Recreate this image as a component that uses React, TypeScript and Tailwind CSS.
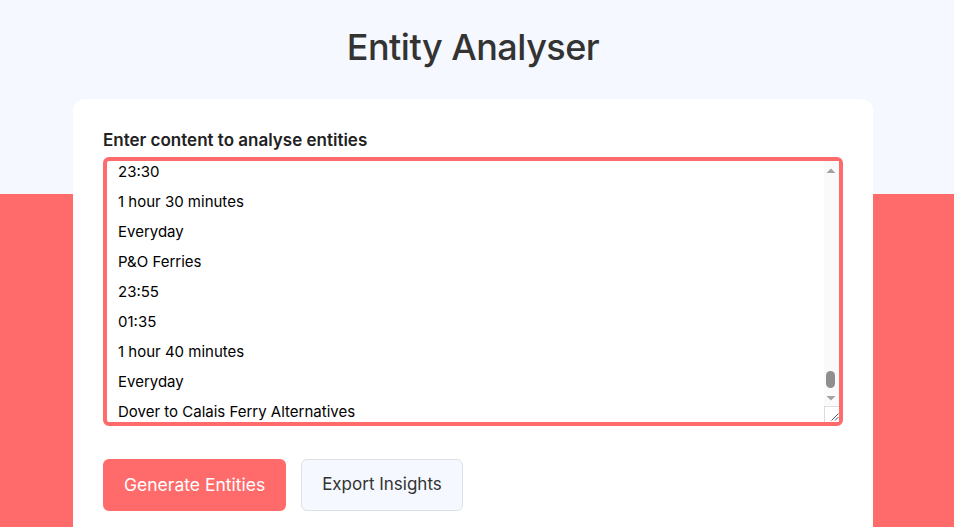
import React, { useEffect, useRef } from "react";

// Ferry timetable used as the pre-filled textarea content
const routes: [string, string, string, string][] = [
  ["DFDS", "00:30", "02:00", "1 hour 30 minutes"],
  ["P&O Ferries", "02:05", "03:45", "1 hour 40 minutes"],
  ["DFDS", "04:00", "05:30", "1 hour 30 minutes"],
  ["P&O Ferries", "05:40", "07:20", "1 hour 40 minutes"],
  ["DFDS", "06:00", "07:30", "1 hour 30 minutes"],
  ["P&O Ferries", "07:25", "09:05", "1 hour 40 minutes"],
  ["DFDS", "08:00", "09:30", "1 hour 30 minutes"],
  ["P&O Ferries", "09:10", "10:50", "1 hour 40 minutes"],
  ["DFDS", "10:00", "11:30", "1 hour 30 minutes"],
  ["P&O Ferries", "11:15", "12:55", "1 hour 40 minutes"],
  ["DFDS", "12:00", "13:30", "1 hour 30 minutes"],
  ["P&O Ferries", "13:20", "15:00", "1 hour 40 minutes"],
  ["DFDS", "14:00", "15:30", "1 hour 30 minutes"],
  ["P&O Ferries", "15:25", "17:05", "1 hour 40 minutes"],
  ["DFDS", "16:00", "17:30", "1 hour 30 minutes"],
  ["P&O Ferries", "17:30", "19:10", "1 hour 40 minutes"],
  ["DFDS", "18:00", "19:30", "1 hour 30 minutes"],
  ["P&O Ferries", "19:35", "21:15", "1 hour 40 minutes"],
  ["DFDS", "22:00", "23:30", "1 hour 30 minutes"],
  ["P&O Ferries", "23:55", "01:35", "1 hour 40 minutes"],
];

const lines: string[] = [
  "Dover to Calais Ferry Timetable",
  "Operator",
  "Departure",
  "Arrival",
  "Duration",
  "Frequency",
];
routes.forEach(([op, dep, arr, dur]) => {
  lines.push(op, dep, arr, dur, "Everyday");
});
lines.push(
  "Dover to Calais Ferry Alternatives",
  "Eurotunnel Le Shuttle",
  "Folkestone to Calais",
  "35 minutes"
);

const content = lines.join("\n");

// index of the "23:30" arrival line of the last DFDS sailing
const firstVisible = lines.lastIndexOf("23:30");

// Classic scrollbar drawn over the textarea (headless browser hides the native one)
const FakeScrollbar = () => (
  <div className="pointer-events-none absolute top-[4px] right-[4px] bottom-[4px] flex w-[15px] flex-col bg-[#fafafa]">
    <div className="h-[15px] shrink-0">
      <svg width="15" height="15" viewBox="0 0 15 15">
        <polygon points="2.5,12 11.5,12 7,7.5" fill="#a3a3a3" />
      </svg>
    </div>
    <div className="relative flex-1">
      <div className="absolute bottom-[3px] left-[2px] h-[17px] w-[9px] rounded-full bg-[#8e8e8e]" />
    </div>
    <div className="h-[15px] shrink-0">
      <svg width="15" height="15" viewBox="0 0 15 15">
        <polygon points="2.5,5 11.5,5 7,9.5" fill="#a3a3a3" />
      </svg>
    </div>
    <div className="h-[16px] shrink-0 border-t border-l border-[#dcdcdc] bg-white">
      <svg width="15" height="15" viewBox="0 0 15 15">
        <path d="M13.5 6.5 L6.5 13.5 M13.5 10 L10 13.5" stroke="#555555" strokeWidth="1" />
      </svg>
    </div>
  </div>
);

export default function App() {
  const areaRef = useRef<HTMLTextAreaElement>(null);

  useEffect(() => {
    if (!areaRef.current) return;
    // padding-top 12px + line offset, nudged up like the screenshot
    areaRef.current.scrollTop = 12 + firstVisible * 30 + 4;
  }, []);

  return (
    <div className="min-h-screen bg-[linear-gradient(to_bottom,#f5f8fe_194px,#ff6b6b_194px)] pr-2 font-['Inter',sans-serif]">
      <h1 className="pt-[25px] text-center text-[36px] font-medium leading-[44px] tracking-[-0.5px] text-[#333333]">
        Entity Analyser
      </h1>

      <div className="mx-auto mt-[30px] w-[800px] rounded-xl bg-white px-[30px] pt-[30px] pb-10">
        <label className="block text-[17px] font-semibold leading-[22px] text-[#222222]">
          Enter content to analyse entities
        </label>
        <div className="relative mt-[6px]">
          <textarea
            ref={areaRef}
            defaultValue={content}
            className="block h-[269px] w-full resize-none rounded-md border-4 border-[#ff6b6b] py-3 pr-[26px] pl-[11px] text-[15px] leading-[30px] text-black outline-none"
          />
          <FakeScrollbar />
        </div>

        <div className="mt-[33px] flex gap-[15px]">
          <button className="h-[52px] rounded-md bg-[#ff6b6b] px-[21px] text-[17.5px] text-white">
            Generate Entities
          </button>
          <button className="h-[52px] rounded-md border border-[#dde1e7] bg-[#f5f8fe] px-5 text-[17px] text-[#333333]">
            Export Insights
          </button>
        </div>
      </div>
    </div>
  );
}
